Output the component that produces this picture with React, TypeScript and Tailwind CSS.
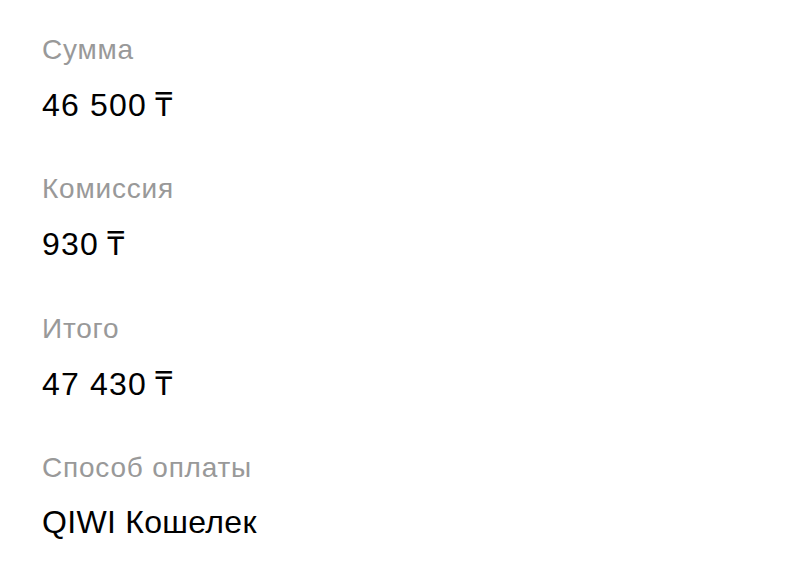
const rows = [
  { label: 'Сумма', value: '46 500', currency: true },
  { label: 'Комиссия', value: '930', currency: true },
  { label: 'Итого', value: '47 430', currency: true },
  { label: 'Способ оплаты', value: 'QIWI Кошелек', currency: false },
]

export default function App() {
  return (
    <div className="w-[800px] h-[572px] bg-white px-[42px] pt-[33px] font-['Liberation_Sans','DejaVu_Sans',sans-serif]">
      <div className="flex flex-col">
        {rows.map((row) => (
          <div key={row.label} className="h-[139.3px]">
            <div className="text-[28px] leading-[34px] tracking-[0.8px] text-[#999999]">{row.label}</div>
            <div className="mt-[18px] text-[32px] leading-[38px] text-black">
              {row.currency ? (
                <>
                  <span className="tracking-[1.2px]">{row.value}</span>
                  <span className="ml-[8px] font-['Noto_Sans','DejaVu_Sans',sans-serif]">₸</span>
                </>
              ) : (
                <span className="tracking-[0.3px]">{row.value}</span>
              )}
            </div>
          </div>
        ))}
      </div>
    </div>
  )
}
